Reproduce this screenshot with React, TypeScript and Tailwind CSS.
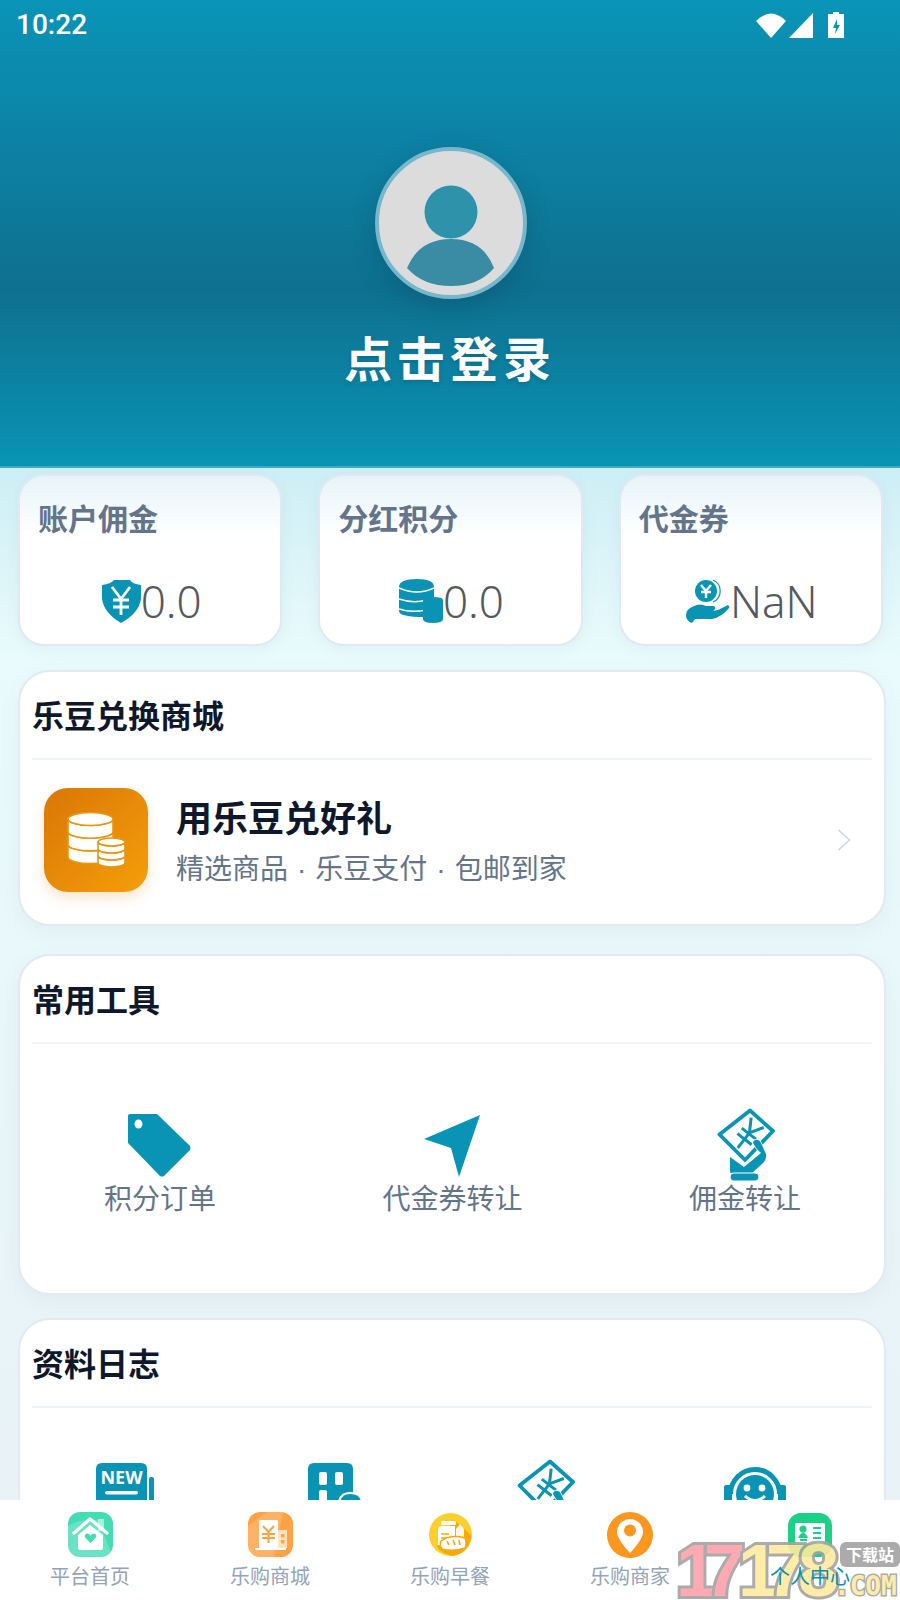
import React from "react";

const CJK = "font-['Noto_Sans_CJK_SC','Noto_Sans',sans-serif]";

function CouponHand() {
  return (
    <svg width="60" height="74" viewBox="0 0 60 74" className="block">
      <path d="M35 3.5 L58 24 L30 53 L4.5 27.5 Z" fill="none" stroke="#0994b6" strokeWidth="3.8" strokeLinejoin="round" />
      <g transform="rotate(38 32 29)" stroke="#0994b6" strokeWidth="3" fill="none">
        <path d="M24 12 L32 25 L40 12" />
        <path d="M32 25 V44" />
        <path d="M23 26 H41 M23 33 H41" />
      </g>
      <path
        d="M40 33 Q44 32 46 36 L51 47 Q52 52 48 56 L36 67 H18 Q15 67 15 64 V50 L29 60 L46 46 Q41 42 38 36 Q38 34 40 33 Z"
        fill="#0994b6"
        stroke="#fff"
        strokeWidth="1.6"
        paintOrder="stroke"
      />
      <rect x="15" y="66" width="29" height="8" rx="4" fill="#0994b6" stroke="#fff" strokeWidth="1.2" />
    </svg>
  );
}

function Stat({ title, icon, value }: { title: string; icon: React.ReactNode; value: string }) {
  return (
    <div className="flex-1 h-[172px] box-border rounded-[26px] border-2 border-[#e0e9f1] bg-gradient-to-b from-[#e6f4f8] to-white to-[36%] shadow-[0_4px_14px_rgba(100,116,139,0.07)] flex flex-col">
      <div className={`${CJK} mt-[21px] ml-[18px] h-[40px] leading-[40px] text-[30px] font-bold text-[#64748b]`}>{title}</div>
      <div className="flex items-center justify-center mt-[39px] pl-[2px]">
        {icon}
        <span className="font-['Noto_Sans',sans-serif] font-light text-[44px] leading-[50px] text-[#55595e]">{value}</span>
      </div>
    </div>
  );
}

function SectionHead({ title }: { title: string }) {
  return (
    <div className={`${CJK} mx-[12px] h-[88px] box-border border-b-2 border-[#f1f5f9] flex items-center text-[32px] font-bold text-[#0f172a] pb-[2px]`}>
      {title}
    </div>
  );
}

function CoinsIcon() {
  const Stack = ({ cx, top, rx, ry, n, step }: { cx: number; top: number; rx: number; ry: number; n: number; step: number }) => (
    <g fill="#fff" stroke="#e9950d" strokeWidth="1.6">
      {Array.from({ length: n }).map((_, i) => {
        const k = n - 1 - i;
        const y = top + k * step;
        return (
          <path key={i} d={`M${cx - rx} ${y} V${y + step} A${rx} ${ry} 0 0 0 ${cx + rx} ${y + step} V${y} A${rx} ${ry} 0 0 1 ${cx - rx} ${y} Z`} />
        );
      })}
      <ellipse cx={cx} cy={top} rx={rx} ry={ry} />
    </g>
  );
  return (
    <svg width="104" height="104" viewBox="0 0 104 104">
      <Stack cx={46.5} top={31} rx={22.5} ry={6.5} n={3} step={12.7} />
      <Stack cx={67.5} top={54} rx={13.5} ry={4} n={3} step={7} />
    </svg>
  );
}

function HomeIcon() {
  return (
    <svg width="45" height="45" viewBox="0 0 45 45">
      <rect width="45" height="45" rx="12" fill="#44dcb4" />
      <path d="M0 14 Q14 6 30 8 L45 45 H12 Q0 45 0 33 Z" fill="#fff" opacity="0.2" />
      <rect x="30" y="7" width="6" height="12" fill="#fff" opacity="0.55" />
      <path d="M6 21 L22 7 L39 21" fill="none" stroke="#fff" strokeWidth="3.4" strokeLinecap="round" strokeLinejoin="round" />
      <path d="M10 23 L22 13 L35 23 V36 Q35 38 33 38 H12 Q10 38 10 36 Z" fill="#fff" />
      <path d="M22.5 31 L17 25.5 Q16 22 19 21.5 Q21.5 21.5 22.5 23.5 Q23.5 21.5 26 21.5 Q29 22 28 25.5 Z" fill="#44dcb4" />
    </svg>
  );
}

function MallIcon() {
  return (
    <svg width="45" height="45" viewBox="0 0 45 45">
      <rect width="45" height="45" rx="12" fill="#ffa245" />
      <path d="M0 14 Q12 6 18 0 L35 0 L26 45 H12 Q0 45 0 33 Z" fill="#fff" opacity="0.18" />
      <rect x="11" y="8" width="19" height="28" rx="1.5" fill="#fff" />
      <rect x="30" y="18" width="9" height="18" fill="#ffe2c0" />
      <rect x="7" y="36" width="31" height="2" fill="#fff" />
      <g fill="none" stroke="#ffa245" strokeWidth="2">
        <path d="M15 14 L20.5 20 L26 14 M20.5 20 V31 M14 22 H27 M14 26 H27" />
      </g>
      <rect x="33" y="22" width="3.5" height="3.5" fill="#ffa245" />
      <rect x="33" y="28" width="3.5" height="3.5" fill="#ffa245" />
    </svg>
  );
}

function BreakfastIcon() {
  return (
    <svg width="43" height="43" viewBox="0 0 43 43">
      <circle cx="21.5" cy="21.5" r="21.5" fill="#fbcf2c" />
      <path d="M25 7 L42 22 Q42 38 25 43 Q14 42 8 34 Z" fill="#f7a908" />
      <rect x="12" y="8" width="15" height="4" rx="1" fill="#fff" />
      <path d="M9 17 Q9 13 13 13 H26 V32 H9 Z" fill="#fff" />
      <path d="M27 16 L31 11 L35 16 V27 H27 Z" fill="#fff" opacity="0.9" />
      <path d="M12 21 H20 M12 25 H18" stroke="#f7a908" strokeWidth="1.6" />
      <path d="M12 28 Q22 21 36 25 Q38 30 36 35 Q24 39 13 36 Q10 32 12 28 Z" fill="#fff" stroke="#f7a908" strokeWidth="1.4" />
      <path d="M18 28 L20 32 M24 27 L26 32 M30 27 L31 32" stroke="#f7a908" strokeWidth="1.6" />
    </svg>
  );
}

function PinIcon() {
  return (
    <svg width="46" height="46" viewBox="0 0 46 46">
      <circle cx="23" cy="23" r="23" fill="#fb961e" />
      <path d="M23 41 Q10 27 10 20 A13 13 0 0 1 36 20 Q36 27 23 41 Z" fill="#fff" />
      <circle cx="23" cy="18.5" r="6" fill="#fb961e" />
    </svg>
  );
}

function CardIcon() {
  return (
    <svg width="44" height="44" viewBox="0 0 44 44">
      <rect width="44" height="44" rx="13" fill="#1cd088" />
      <rect x="7" y="10" width="30" height="21" rx="1.5" fill="#fff" />
      <circle cx="15" cy="16" r="3.5" fill="#1cd088" />
      <path d="M10 25 Q15 14 20 25 Z" fill="#1cd088" />
      <path d="M12 27 H19" stroke="#1cd088" strokeWidth="2" />
      <path d="M25 15 H33 M25 20 H33 M25 25 H33" stroke="#1cd088" strokeWidth="2" />
    </svg>
  );
}

function NavItem({ icon, label, active }: { icon: React.ReactNode; label: string; active?: boolean }) {
  return (
    <div className="flex-1 flex flex-col items-center pt-[12px]">
      <div className="h-[45px] flex items-center justify-center">{icon}</div>
      <div className={`${CJK} mt-[5px] text-[20px] leading-[28px] ${active ? "relative z-20 text-[#0891b2]" : "text-[#94a3b8]"}`}>{label}</div>
    </div>
  );
}

function Watermark() {
  const digit = "absolute top-0 font-['Liberation_Sans',sans-serif] font-bold text-[74px] leading-[58px] [-webkit-text-stroke:6px_#a3a3a3] [paint-order:stroke_fill]";
  return (
    <div className="absolute right-0 bottom-0 w-[224px] h-[58px] z-10 opacity-90 pointer-events-none">
      <span className={`${digit} left-[0px] text-[#ffa0aa]`}>1</span>
      <span className={`${digit} left-[28px] text-[#ffa0aa]`}>7</span>
      <span className={`${digit} left-[62px] text-[#ffeb9e]`}>1</span>
      <span className={`${digit} left-[90px] text-[#ffeb9e]`}>7</span>
      <span className={`${digit} left-[122px] text-[#ffeb9e]`}>8</span>
      <div className={`${CJK} absolute left-[164px] top-0 w-[60px] h-[25px] rounded-[6px] bg-[#a3a3a3] text-white text-[16px] font-bold leading-[25px] text-center`}>下载站</div>
      <div className="absolute left-[158px] top-[30px] font-['DejaVu_Sans_Mono',monospace] font-bold text-[26px] leading-[28px] text-[#ffeb9e] [-webkit-text-stroke:3px_#a3a3a3] [paint-order:stroke_fill]">.COM</div>
    </div>
  );
}

export default function App() {
  return (
    <div className="relative w-[900px] h-[1600px] overflow-hidden flex flex-col bg-gradient-to-b from-[#cdeef5] from-[29%] via-[#e9fbfc] via-[41%] to-[#e8f1f6]">
      <div className="flex-1 min-h-0 overflow-hidden">
        <header className="h-[468px] box-border border-b-2 border-[#3fa9c6] bg-gradient-to-b from-[#0994b8] via-[#0e7090] via-[62%] to-[#0994b4] flex flex-col items-center relative">
          <div className="w-full h-[50px] flex items-center justify-between pl-[16px] pr-[54px]">
            <span className="font-['Roboto',sans-serif] font-medium text-[28px] leading-[50px] text-white">10:22</span>
            <svg width="90" height="30" viewBox="0 0 90 30" className="block">
              <path d="M0 11 Q15 -4 30 11 L15 28 Z" fill="#fff" />
              <path d="M57 3 V28 H33 Z" fill="#fff" />
              <path d="M73 4 H77 V2 H83 V4 H88 V28 H72 V4 Z" fill="#fff" />
              <path d="M81 9 L77 18 H80 L79 24 L84 15 H81 Z" fill="#0994b8" />
            </svg>
          </div>
          <div className="mt-[97px] ml-[2px] w-[152px] h-[152px] box-border rounded-full border-4 border-[#76b7cb] bg-[#dcdcdc] shadow-[0_8px_24px_rgba(0,50,70,0.25)] overflow-hidden">
            <svg width="144" height="144" viewBox="0 0 144 144" className="block">
              <circle cx="72" cy="61" r="26.5" fill="#2e92ab" />
              <path d="M28 117 Q40 88 72 88 Q104 88 115 117 Q100 135 72 135 Q44 135 28 117 Z" fill="#3a8ca5" />
            </svg>
          </div>
          <div className={`${CJK} mt-[27px] text-[48px] leading-[60px] font-bold tracking-[5px] text-white [text-shadow:0_2px_4px_rgba(0,0,0,0.15)]`}>点击登录</div>
        </header>

        <main className="pt-[6px] pl-[18px]">
          <div className="flex gap-[36px] w-[865px]">
            <Stat
              title="账户佣金"
              value="0.0"
              icon={
                <svg width="40" height="44" viewBox="0 0 40 44" className="block">
                  <path d="M1 6 Q10 5 13 1 H29 Q31 5 40 6 V20 Q38 34 20 44 Q3 34 1 20 Z" fill="#0994b6" />
                  <path d="M11 8 L20 20 L29 8 M20 20 V36 M12 21 H28 M12 28 H28" fill="none" stroke="#fff" strokeWidth="2.8" />
                </svg>
              }
            />
            <Stat
              title="分红积分"
              value="0.0"
              icon={
                <svg width="44" height="44" viewBox="0 0 44 44" className="block">
                  <path d="M0 8 Q0 0 18 0 Q35 0 35 8 V32 L26 38 Q0 38 0 32 Z" fill="#0994b6" />
                  <path d="M0 9 Q18 17 35 9 M0 20 Q14 25 28 21 M0 30 Q12 34 28 31" fill="none" stroke="#fff" strokeWidth="1.6" />
                  <path d="M24 21 Q24 18 34 18 Q44 18 44 21 V40 Q44 44 34 44 Q24 44 24 40 Z" fill="#0994b6" />
                </svg>
              }
            />
            <Stat
              title="代金券"
              value="NaN"
              icon={
                <svg width="44" height="44" viewBox="0 0 44 44" className="block">
                  <circle cx="20" cy="12" r="11" fill="#0994b6" />
                  <path d="M27 1 A12 12 0 0 1 27 23" fill="none" stroke="#0994b6" strokeWidth="1.2" />
                  <path d="M15 6 L20 12 L25 6 M20 12 V19 M15 13 H25" fill="none" stroke="#fff" strokeWidth="2.4" />
                  <path d="M0 36 Q0 30 8 27 Q14 24 20 27 H28 Q31 29 27 32 L20 33 L32 31 L42 26 Q44 27 43 29 Q36 38 26 40 L9 40 L6 44 Q0 42 0 36 Z" fill="#0994b6" />
                </svg>
              }
            />
          </div>

          <section className="mt-[24px] w-[868px] h-[256px] box-border rounded-[32px] border-2 border-[#e2e9f1] bg-white shadow-[0_6px_20px_rgba(100,116,139,0.07)]">
            <SectionHead title="乐豆兑换商城" />
            <div className="flex items-center pl-[24px] pr-[33px] pt-[28px]">
              <div className="w-[104px] h-[104px] rounded-[24px] bg-gradient-to-br from-[#d97706] to-[#f59e0b] shadow-[0_6px_14px_rgba(217,119,6,0.2)]">
                <CoinsIcon />
              </div>
              <div className={`${CJK} ml-[28px] flex-1 flex flex-col`}>
                <div className="text-[36px] leading-[52px] font-bold text-[#0f172a]">用乐豆兑好礼</div>
                <div className="text-[28px] leading-[40px] mt-[5px] text-[#64748b]">
                  精选商品<span className="font-['Liberation_Sans',sans-serif] mx-[9px]">·</span>乐豆支付<span className="font-['Liberation_Sans',sans-serif] mx-[9px]">·</span>包邮到家
                </div>
              </div>
              <svg width="14" height="24" viewBox="0 0 14 24" className="block">
                <path d="M1.5 2 L12.5 12 L1.5 22" fill="none" stroke="#cbd5e1" strokeWidth="1.5" />
              </svg>
            </div>
          </section>

          <section className="mt-[28px] w-[868px] h-[341px] box-border rounded-[32px] border-2 border-[#e2e9f1] bg-white shadow-[0_6px_20px_rgba(100,116,139,0.07)]">
            <SectionHead title="常用工具" />
            <div className={`${CJK} flex justify-between pl-[84px] pr-[83px] pt-[65px] text-[28px] leading-[40px] text-[#64748b]`}>
              <div className="flex flex-col items-center">
                <div className="h-[72px] flex items-end">
                  <svg width="64" height="64" viewBox="0 0 64 64" className="block mb-[3px]">
                    <path d="M2 0 H29 L62 32 Q63 34 62 36 L36 62 Q34 63 32 62 L0 29 V2 Q0 0 2 0 Z" fill="#0994b6" />
                    <ellipse cx="10.5" cy="10" rx="4" ry="4.5" fill="#fff" />
                  </svg>
                </div>
                <div className="-mt-[4px]">积分订单</div>
              </div>
              <div className="flex flex-col items-center">
                <div className="h-[72px] flex items-end">
                  <svg width="56" height="62" viewBox="0 0 56 62" className="block mb-[4px]">
                    <path d="M0 24 L56 0 L35 62 L27 33 Z" fill="#0994b6" />
                  </svg>
                </div>
                <div className="-mt-[4px]">代金券转让</div>
              </div>
              <div className="flex flex-col items-center">
                <div className="h-[72px] flex items-end">
                  <CouponHand />
                </div>
                <div className="-mt-[4px]">佣金转让</div>
              </div>
            </div>
          </section>

          <section className="mt-[23px] w-[868px] h-[337px] box-border rounded-[32px] border-2 border-[#e2e9f1] bg-white">
            <SectionHead title="资料日志" />
            <div className="grid grid-cols-4 w-[840px] pt-[50px]">
              <div className="flex justify-center">
                <svg width="58" height="60" viewBox="0 0 58 60" className="block mt-[5px]">
                  <path d="M0 6 Q0 0 6 0 H45 Q51 0 51 6 V60 H0 Z" fill="#0994b6" />
                  <rect x="53" y="14" width="5" height="46" rx="2" fill="#0994b6" />
                  <text x="25.5" y="21" textAnchor="middle" fontFamily="'Noto Sans',sans-serif" fontWeight="700" fontSize="18" fill="#fff">NEW</text>
                  <rect x="9" y="28" width="33" height="3.4" rx="1.7" fill="#fff" />
                </svg>
              </div>
              <div className="flex justify-center">
                <svg width="54" height="60" viewBox="0 0 54 60" className="block mt-[5px]">
                  <path d="M0 6 Q0 0 6 0 H39 Q45 0 45 6 V30 H0 Z M0 30 H45 V60 H0 Z" fill="#0994b6" />
                  <rect x="11" y="9" width="8" height="13" rx="2" fill="#fff" />
                  <rect x="27" y="9" width="8" height="13" rx="2" fill="#fff" />
                  <rect x="11" y="27" width="8" height="13" rx="2" fill="#fff" />
                  <path d="M31 40 Q32 30 42 30 Q54 30 54 40 V60 H31 Z" fill="#0994b6" stroke="#fff" strokeWidth="2" />
                </svg>
              </div>
              <div className="flex justify-center">
                <CouponHand />
              </div>
              <div className="flex justify-center">
                <svg width="62" height="60" viewBox="0 0 62 60" className="block mt-[9px]">
                  <path d="M6.5 27 A24.5 24.5 0 0 1 55.5 27" fill="none" stroke="#0994b6" strokeWidth="5" />
                  <circle cx="31" cy="27" r="19" fill="#0994b6" />
                  <rect x="0" y="18" width="8" height="22" rx="2" fill="#0994b6" />
                  <rect x="54" y="18" width="8" height="22" rx="2" fill="#0994b6" />
                  <circle cx="23" cy="21" r="3.4" fill="#fff" />
                  <circle cx="38" cy="21" r="3.4" fill="#fff" />
                  <path d="M21 29 Q31 38 41 29" fill="none" stroke="#fff" strokeWidth="3" />
                </svg>
              </div>
            </div>
          </section>
        </main>
      </div>

      <nav className="h-[100px] bg-white flex shrink-0">
        <NavItem icon={<HomeIcon />} label="平台首页" />
        <NavItem icon={<MallIcon />} label="乐购商城" />
        <NavItem icon={<BreakfastIcon />} label="乐购早餐" />
        <NavItem icon={<PinIcon />} label="乐购商家" />
        <NavItem icon={<CardIcon />} label="个人中心" active />
      </nav>
      <Watermark />
    </div>
  );
}
